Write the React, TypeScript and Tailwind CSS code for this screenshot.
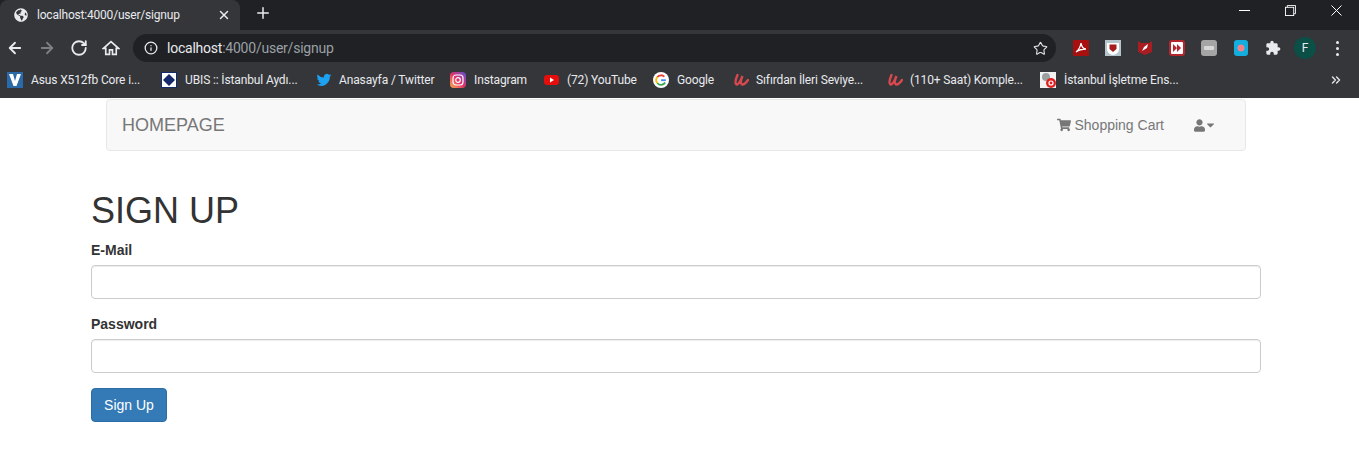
import { ReactNode } from 'react'
import { ArrowLeft, ArrowRight, RotateCw, Info, Star, Plus, X, ChevronsRight } from 'lucide-react'
import { FaShoppingCart, FaUser, FaCaretDown, FaGlobeAmericas } from 'react-icons/fa'

const chromeFont = "font-['Roboto','Noto_Sans',sans-serif]"

function UdemyIcon() {
  return (
    <svg viewBox="0 0 16 16" className="h-4 w-4">
      <path
        d="M4.500 3 Q1 11 3.500 12.500 Q6 13 9.500 4 Q6.500 11 9 12.500 Q11.500 13 15 8"
        fill="none"
        stroke="#d9484f"
        strokeWidth="2.400"
        strokeLinecap="round"
      />
    </svg>
  )
}

const bookmarks: { label: string; width: string; gap: string; icon: ReactNode }[] = [
  {
    label: 'Asus X512fb Core i...',
    width: 'w-[154px]',
    gap: 'gap-2',
    icon: (
      <svg viewBox="0 0 16 16" className="h-4 w-4">
        <rect width="16" height="16" fill="#2a6aa8" />
        <path d="M2 2 H6 L8 9 L10 2 H14 L9.500 14 H6.500 Z" fill="#fff" />
      </svg>
    ),
  },
  {
    label: 'UBIS :: İstanbul Aydı...',
    width: 'w-[155px]',
    gap: 'gap-2',
    icon: (
      <svg viewBox="0 0 16 16" className="h-4 w-4">
        <rect width="16" height="16" fill="#fff" />
        <rect x="0.500" y="0.500" width="15" height="15" fill="none" stroke="#12296b" />
        <path d="M8 2 L14 8 L8 14 L2 8 Z" fill="#12296b" />
      </svg>
    ),
  },
  {
    label: 'Anasayfa / Twitter',
    width: 'w-[134px]',
    gap: 'gap-[7px]',
    icon: (
      <svg viewBox="0 0 24 24" className="h-4 w-4">
        <path
          fill="#1da1f2"
          d="M23 5a9 9 0 0 1-2.600.7 4.500 4.500 0 0 0 2-2.500 9 9 0 0 1-2.900 1.100 4.500 4.500 0 0 0-7.700 4.100A12.800 12.800 0 0 1 2.500 3.700a4.500 4.500 0 0 0 1.400 6 4.500 4.500 0 0 1-2-.6c0 2.200 1.500 4 3.600 4.500a4.500 4.500 0 0 1-2 .1 4.500 4.500 0 0 0 4.200 3.100A9 9 0 0 1 1 18.700 12.800 12.800 0 0 0 20.700 7.300 9 9 0 0 0 23 5z"
        />
      </svg>
    ),
  },
  {
    label: 'Instagram',
    width: 'w-[94px]',
    gap: 'gap-2',
    icon: (
      <svg viewBox="0 0 16 16" className="h-4 w-4">
        <defs>
          <linearGradient id="ig" x1="0" y1="1" x2="1" y2="0">
            <stop offset="0" stopColor="#fdb04b" />
            <stop offset="0.5" stopColor="#e1306c" />
            <stop offset="1" stopColor="#5b51d8" />
          </linearGradient>
        </defs>
        <rect width="16" height="16" rx="4" fill="url(#ig)" />
        <rect x="3" y="3" width="10" height="10" rx="3" fill="none" stroke="#fff" strokeWidth="1.200" />
        <circle cx="8" cy="8" r="2.300" fill="none" stroke="#fff" strokeWidth="1.200" />
      </svg>
    ),
  },
  {
    label: '(72) YouTube',
    width: 'w-[109px]',
    gap: 'gap-[7px]',
    icon: (
      <svg viewBox="0 0 16 16" className="h-4 w-4">
        <rect y="3" width="15" height="10" rx="3" fill="#e60d0d" />
        <path d="M6 5.500 L10 8 L6 10.500 Z" fill="#fff" />
      </svg>
    ),
  },
  {
    label: 'Google',
    width: 'w-[80px]',
    gap: 'gap-2',
    icon: (
      <svg viewBox="0 0 16 16" className="h-4 w-4">
        <circle cx="8" cy="8" r="8" fill="#fff" />
        <path d="M12.800 8.200 H8.100" stroke="#4285f4" strokeWidth="1.800" fill="none" />
        <path d="M12.200 10.500 A4.800 4.800 0 0 1 4.300 11" stroke="#34a853" strokeWidth="1.800" fill="none" />
        <path d="M4.300 11 A4.800 4.800 0 0 1 4.300 5" stroke="#fbbc05" strokeWidth="1.800" fill="none" />
        <path d="M4.300 5 A4.800 4.800 0 0 1 11.400 4.700" stroke="#ea4335" strokeWidth="1.800" fill="none" />
      </svg>
    ),
  },
  { label: 'Sıfırdan İleri Seviye...', width: 'w-[154px]', gap: 'gap-[7px]', icon: <UdemyIcon /> },
  { label: '(110+ Saat) Komple...', width: 'w-[153px]', gap: 'gap-[7px]', icon: <UdemyIcon /> },
  {
    label: 'İstanbul İşletme Ens...',
    width: 'w-[150px]',
    gap: 'gap-2',
    icon: (
      <svg viewBox="0 0 16 16" className="h-4 w-4">
        <rect width="16" height="16" fill="#f2f2f2" />
        <circle cx="6" cy="5" r="4" fill="#9aa0a0" />
        <circle cx="11" cy="11" r="5" fill="#e02020" />
        <circle cx="11" cy="11" r="2" fill="none" stroke="#fff" strokeWidth="1.200" />
      </svg>
    ),
  },
]

function Extension({ children }: { children: ReactNode }) {
  return <div className="flex h-7 w-8 items-center justify-center">{children}</div>
}

function Field({ label, type }: { label: string; type: string }) {
  return (
    <div className="mb-[15px]">
      <label className="mb-[5px] block text-sm leading-5 font-bold text-[#333]">{label}</label>
      <input
        type={type}
        className="block h-[34px] w-full rounded border border-[#ccc] bg-white px-3 shadow-[inset_0_1px_1px_rgba(0,0,0,0.075)]"
      />
    </div>
  )
}

export default function App() {
  return (
    <div className="h-[452px] w-[1359px] overflow-hidden bg-white">
      <div className={chromeFont}>
        {/* Tab strip */}
        <div className="flex h-[30px] items-start bg-[#202124]">
          <div className="flex h-[30px] w-[240px] items-center rounded-t-lg bg-[#35363a] pr-[9px] pl-[14px]">
            <FaGlobeAmericas className="h-[14px] w-[14px] text-[#e8eaed]" />
            <span className="ml-[9px] flex-1 text-xs tracking-[-0.2px] text-[#e8eaed]">localhost:4000/user/signup</span>
            <X className="h-[14px] w-[14px] text-[#e8eaed]" strokeWidth={2.5} />
          </div>
          <div className="ml-[14px] flex h-[26px] items-center">
            <Plus className="h-[18px] w-[18px] text-[#e8eaed]" strokeWidth={2} />
          </div>
          <div className="ml-auto flex h-[20px] items-center pr-[17px] text-white">
            <div className="mr-[35px] h-px w-[11px] bg-white" />
            <svg viewBox="0 0 12 12" className="mr-[35px] h-[11px] w-[11px]" fill="none" stroke="currentColor">
              <rect x="0.500" y="2.500" width="9" height="9" />
              <path d="M2.500 2.500 V0.500 H11.500 V9.500 H9.500" />
            </svg>
            <svg viewBox="0 0 11 11" className="h-[11px] w-[11px]" fill="none" stroke="currentColor">
              <path d="M0.500 0.500 L10.500 10.500 M10.500 0.500 L0.500 10.500" />
            </svg>
          </div>
        </div>

        {/* Toolbar */}
        <div className="flex h-[36px] items-center bg-[#35363a] pl-[6px]">
          <ArrowLeft className="h-[18px] w-[18px] text-[#e8eaed]" strokeWidth={2.4} />
          <ArrowRight className="ml-[14px] h-[18px] w-[18px] text-[#7c7f85]" strokeWidth={2.4} />
          <RotateCw className="ml-[14px] h-[18px] w-[18px] text-[#e8eaed]" strokeWidth={2.4} />
          <svg viewBox="0 0 24 24" className="ml-[14px] h-[18px] w-[18px]" fill="none" stroke="#e8eaed" strokeWidth="2.200">
            <path d="M10 20.500v-6h4v6h5v-8h3L12 3.500 2 12.500h3v8z" />
          </svg>
          <div className="ml-[13px] flex h-[28px] w-[923px] items-center rounded-full bg-[#202124] pr-2 pl-[11px]">
            <Info className="h-[14px] w-[14px] text-[#e8eaed]" strokeWidth={2.2} />
            <span className="ml-[9px] flex-1 text-sm tracking-[-0.23px] text-[#9aa0a6]">
              <span className="text-[#e8eaed]">localhost</span>:4000/user/signup
            </span>
            <Star className="h-[15px] w-[15px] text-[#dee1e6]" strokeWidth={1.8} />
          </div>
          <div className="ml-[9px] flex">
            <Extension>
              <svg viewBox="0 0 16 16" className="h-4 w-4">
                <rect width="16" height="16" rx="1" fill="#a80f0f" />
                <path d="M3 12 Q7 9 8 3 Q9 9 13 9 Q7 9 3 12 Z" fill="none" stroke="#fff" strokeWidth="1.300" />
              </svg>
            </Extension>
            <Extension>
              <svg viewBox="0 0 16 16" className="h-4 w-4">
                <rect width="16" height="16" fill="#b4c6cc" />
                <path d="M2 3 H14 V9 Q14 14 8 15 Q2 14 2 9 Z" fill="#fff" />
                <path d="M4.500 4.500 H11.500 V9 L8 12 L4.500 9 Z" fill="#a51c1c" />
              </svg>
            </Extension>
            <Extension>
              <svg viewBox="0 0 16 16" className="h-4 w-4">
                <path d="M1 1 L4 3 H12 L15 1 V12 L8 15 L1 12 Z" fill="#a81c22" />
                <path d="M5 11 L7 7 L11 4 L10 8 Z" fill="#fff" />
              </svg>
            </Extension>
            <Extension>
              <svg viewBox="0 0 16 16" className="h-4 w-4">
                <rect width="16" height="16" rx="3" fill="#b5252b" />
                <rect x="2" y="2" width="12" height="12" rx="1" fill="#fff" />
                <path d="M4 4 L8 8 L4 12 Z M8 4 L12 8 L8 12 Z" fill="#b5252b" />
              </svg>
            </Extension>
            <Extension>
              <svg viewBox="0 0 16 16" className="h-4 w-4">
                <rect width="16" height="16" rx="3" fill="#a5a5a5" />
                <rect x="3" y="6" width="10" height="4" rx="1" fill="#d8d8d8" />
              </svg>
            </Extension>
            <Extension>
              <svg viewBox="0 0 16 16" className="h-4 w-4">
                <rect x="1" width="14" height="16" rx="3" fill="#12aede" />
                <circle cx="8" cy="8" r="3.500" fill="#f2828a" />
              </svg>
            </Extension>
            <Extension>
              <svg viewBox="0 0 24 24" className="h-4 w-4" fill="#e8eaed">
                <path d="M20.500 11H19V7c0-1.100-.9-2-2-2h-4V3.500C13 2.120 11.880 1 10.500 1S8 2.120 8 3.500V5H4c-1.100 0-1.990.9-1.990 2v3.800H3.500c1.490 0 2.700 1.210 2.700 2.700s-1.210 2.700-2.700 2.700H2V20c0 1.100.9 2 2 2h3.800v-1.500c0-1.490 1.210-2.700 2.700-2.700 1.490 0 2.700 1.210 2.700 2.700V22H17c1.100 0 2-.9 2-2v-4h1.500c1.380 0 2.500-1.120 2.500-2.500S21.880 11 20.500 11z" />
              </svg>
            </Extension>
            <Extension>
              <div className="flex h-[22px] w-[22px] items-center justify-center rounded-full bg-[#0b4f46] text-xs text-[#e8eaed]">
                F
              </div>
            </Extension>
            <Extension>
              <div className="flex flex-col gap-[3px]">
                <span className="h-[3px] w-[3px] rounded-full bg-[#e8eaed]" />
                <span className="h-[3px] w-[3px] rounded-full bg-[#e8eaed]" />
                <span className="h-[3px] w-[3px] rounded-full bg-[#e8eaed]" />
              </div>
            </Extension>
          </div>
        </div>

        {/* Bookmarks bar */}
        <div className="flex h-[32px] items-center bg-[#35363a] pb-[4px] pl-[7px]">
          {bookmarks.map((b) => (
            <div key={b.label} className={`flex shrink-0 items-center ${b.width} ${b.gap}`}>
              <span className="shrink-0">{b.icon}</span>
              <span className="text-xs tracking-[-0.13px] whitespace-nowrap text-[#e8eaed]">{b.label}</span>
            </div>
          ))}
          <ChevronsRight className="ml-auto mr-[16px] h-[14px] w-[14px] text-[#dee1e6]" strokeWidth={2.5} />
        </div>
      </div>

      {/* Page */}
      <div className="font-['Liberation_Sans',Arial,sans-serif]">
        <nav className="mx-[106px] mt-[1px] flex h-[52px] w-[1140px] items-center rounded border border-[#e7e7e7] bg-[#f8f8f8] pr-[29px] pl-[15px] text-[#777]">
          <span className="text-lg">HOMEPAGE</span>
          <div className="ml-auto flex items-center text-sm">
            <FaShoppingCart className="h-[14px] w-[14px]" />
            <span className="ml-[3px]">Shopping Cart</span>
            <FaUser className="ml-[30px] h-[13px] w-[11px]" />
            <FaCaretDown className="h-[12px] w-[11px]" />
          </div>
        </nav>

        <div className="mx-[91px] w-[1170px]">
          <h1 className="mt-[40px] mb-[9px] text-4xl leading-[40px] font-normal text-[#333]">SIGN UP</h1>
          <Field label="E-Mail" type="text" />
          <Field label="Password" type="password" />
          <button className="h-[34px] w-[76px] rounded border border-[#2e6da4] bg-[#337ab7] text-sm text-white">
            Sign Up
          </button>
        </div>
      </div>
    </div>
  )
}
